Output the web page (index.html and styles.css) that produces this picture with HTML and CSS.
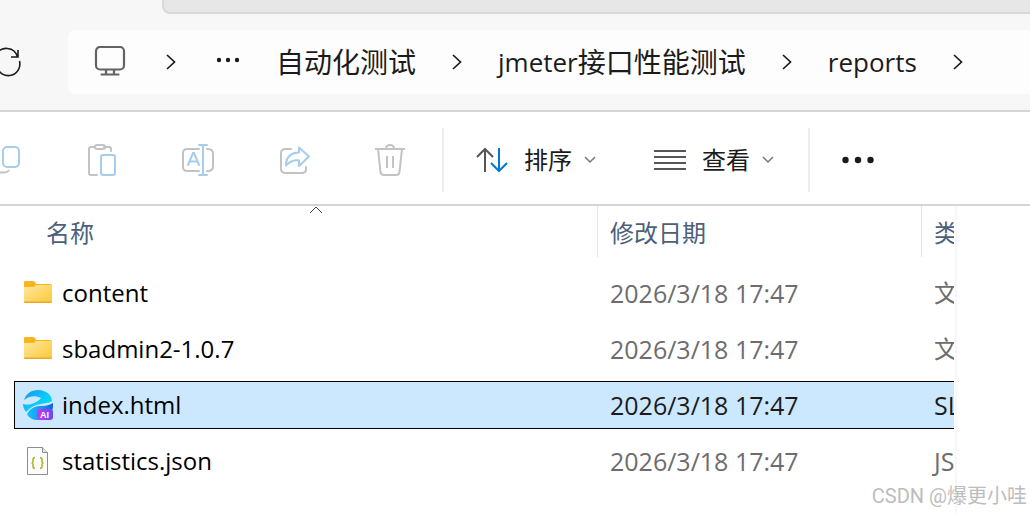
FILE: index.html
```
<!DOCTYPE html>
<html lang="zh-CN">
    <head>
        <meta charset="utf-8">
        <title>reports</title>
        <link rel="stylesheet" href="styles.css">
    </head>
<body>
    <div class="titleBar"><div class="tabStrip"></div></div>

    <nav class="navBar">
        <button class="refreshBtn" aria-label="刷新">
            <svg width="24" height="32" viewBox="0 0 24 32" fill="none" stroke="#1b1b1b" stroke-width="1.600">
                <path d="M-4 9A11.500 11.500 0 0 1 17.500 11M19.500 15A11.500 11.500 0 0 1 -3 21M18 4V11H11"/>
            </svg>
        </button>
        <div class="address">
            <button class="crumb pcIcon" aria-label="此电脑">
                <svg width="38" height="32" viewBox="0 0 38 32" fill="none" stroke="#636363" stroke-width="2.200" stroke-linecap="round">
                    <rect x="4" y="1" width="28" height="22.500" rx="4"/>
                    <path d="M14 24V28M22 24V28M9.500 28.500H26.500"/>
                </svg>
            </button>
            <svg class="arrow" viewBox="0 0 10 16"><path d="M1 1L8.500 8L1 15"/></svg>
            <button class="crumb" aria-label="更多">
                <svg width="28" height="32" viewBox="0 0 28 32" fill="#1b1b1b">
                    <circle cx="7" cy="14" r="2.200"/><circle cx="16" cy="14" r="2.200"/><circle cx="25" cy="14" r="2.200"/>
                </svg>
            </button>
            <button class="crumb">自动化测试</button>
            <svg class="arrow" viewBox="0 0 10 16"><path d="M1 1L8.500 8L1 15"/></svg>
            <button class="crumb"><span class="latin">jmeter</span>接口性能测试</button>
            <svg class="arrow" viewBox="0 0 10 16"><path d="M1 1L8.500 8L1 15"/></svg>
            <button class="crumb"><span class="latin">reports</span></button>
            <svg class="arrow" viewBox="0 0 10 16"><path d="M1 1L8.500 8L1 15"/></svg>
        </div>
    </nav>

    <div class="toolBar">
        <button class="toolBtn copyBtn" aria-label="复制" disabled>
            <svg width="24" height="36" viewBox="0 0 24 36" fill="none" stroke-width="2">
                <path stroke="#c3c3c3" d="M-2 30.500H3Q8 30.500 9 28"/>
                <rect stroke="#a5cdee" x="3" y="5" width="16" height="20" rx="4"/>
            </svg>
        </button>
        <button class="toolBtn" aria-label="粘贴" disabled>
            <svg width="36" height="36" viewBox="0 0 36 36" fill="none" stroke-width="2" stroke-linecap="round">
                <path stroke="#c3c3c3" d="M10 5H7Q5 5 5 7V31Q5 33 7 33H13M20 5H25Q27 5 27 7V9"/>
                <rect stroke="#c3c3c3" x="11" y="3" width="10" height="4" rx="2"/>
                <rect stroke="#a5cdee" x="17" y="13" width="14" height="20" rx="2"/>
            </svg>
        </button>
        <button class="toolBtn" aria-label="重命名" disabled>
            <svg width="36" height="36" viewBox="0 0 36 36" fill="none" stroke-width="2" stroke-linecap="round">
                <path stroke="#c3c3c3" d="M19 7H7Q3 7 3 11V25Q3 29 7 29H19M27 7H28Q33 7 33 12V24Q33 29 28 29H27"/>
                <path stroke="#a5cdee" d="M8 23L13 11H14L19 23M10 19.500H17M19 3H27M23 3V33M19 33H27"/>
            </svg>
        </button>
        <button class="toolBtn" aria-label="共享" disabled>
            <svg width="36" height="36" viewBox="0 0 36 36" fill="none" stroke-width="2" stroke-linecap="round">
                <path stroke="#c3c3c3" d="M15 7H10Q5 7 5 11V27Q5 31 10 31H26Q30 31 30 27V25"/>
                <path stroke="#a5cdee" stroke-linejoin="round" d="M23 5.500L33 14.500L23 24V18.500Q16 17.500 10 23.500Q10 11 23 10.500Z"/>
            </svg>
        </button>
        <button class="toolBtn" aria-label="删除" disabled>
            <svg width="36" height="36" viewBox="0 0 36 36" fill="none" stroke="#c3c3c3" stroke-width="2">
                <path d="M3 7H33M14 7Q14 3 18 3Q22 3 22 7M6 7L8.500 30Q9 33 12 33H24Q27 33 27.500 30L30 7M15 14V26M21 14V26"/>
            </svg>
        </button>
        <span class="divider"></span>
        <button class="menuBtn">
            <svg width="32" height="32" viewBox="0 0 32 32" fill="none" stroke-width="2">
                <path stroke="#555" d="M9 28V5M1 13L9 5L17 13"/>
                <path stroke="#0078d4" d="M23 4V27M15 19L23 27L31 19"/>
            </svg>
            <span>排序</span>
            <svg class="caret" viewBox="0 0 12 8"><path d="M1 1L6 6L11 1"/></svg>
        </button>
        <button class="menuBtn">
            <svg width="32" height="32" viewBox="0 0 32 32" fill="none" stroke="#555" stroke-width="2">
                <path d="M0 7H32M0 13H32M0 19H32M0 25H32"/>
            </svg>
            <span>查看</span>
            <svg class="caret" viewBox="0 0 12 8"><path d="M1 1L6 6L11 1"/></svg>
        </button>
        <span class="divider"></span>
        <button class="moreBtn" aria-label="查看更多">
            <svg width="32" height="8" viewBox="0 0 32 8" fill="#1b1b1b">
                <circle cx="3.500" cy="4" r="3.200"/><circle cx="16" cy="4" r="3.200"/><circle cx="28.500" cy="4" r="3.200"/>
            </svg>
        </button>
    </div>

    <main class="content">
        <div class="filePane">
            <table class="files">
                <colgroup><col><col class="dateCol"><col class="typeCol"></colgroup>
                <thead>
                    <tr>
                        <th class="nameHead">名称
                            <svg class="sortMark" viewBox="0 0 14 8"><path d="M1 7L7 1L13 7"/></svg>
                        </th>
                        <th>修改日期</th>
                        <th>类</th>
                    </tr>
                </thead>
                <tbody>
                    <tr>
                        <td><div class="name">
                            <svg width="30" height="32" viewBox="0 0 30 32">
                                <defs><linearGradient id="folder" x1="0" y1="0" x2="1" y2="1">
                                    <stop offset="0" stop-color="#ffe7a2"/><stop offset="1" stop-color="#fcc938"/>
                                </linearGradient></defs>
                                <path fill="#f9b51c" d="M1 5Q1 4 3 4H10Q12 4 13 7H27Q29 7 29 9V20H1Z"/>
                                <path fill="url(#folder)" d="M1 10H10Q12 10 13 8H29V24Q29 25 28 25H2Q1 25 1 24Z"/>
                                <path fill="#e9a820" d="M1 24.500H29Q29 26 28 26H2Q1 26 1 24.500Z"/>
                            </svg>
                            content
                        </div></td>
                        <td>2026/3/18 17:47</td>
                        <td class="cjk">文</td>
                    </tr>
                    <tr>
                        <td><div class="name">
                            <svg width="30" height="32" viewBox="0 0 30 32">
                                <path fill="#f9b51c" d="M1 5Q1 4 3 4H10Q12 4 13 7H27Q29 7 29 9V20H1Z"/>
                                <path fill="url(#folder)" d="M1 10H10Q12 10 13 8H29V24Q29 25 28 25H2Q1 25 1 24Z"/>
                                <path fill="#e9a820" d="M1 24.500H29Q29 26 28 26H2Q1 26 1 24.500Z"/>
                            </svg>
                            sbadmin2-1.0.7
                        </div></td>
                        <td>2026/3/18 17:47</td>
                        <td class="cjk">文</td>
                    </tr>
                    <tr class="selected">
                        <td><div class="name">
                            <svg width="30" height="32" viewBox="0 0 30 32">
                                <defs>
                                    <linearGradient id="swirl" x1="0" y1="0" x2="1" y2="1">
                                        <stop offset="0" stop-color="#1c8ff0"/><stop offset="0.500" stop-color="#08c8fb"/><stop offset="1" stop-color="#10e4fd"/>
                                    </linearGradient>
                                    <linearGradient id="bowl" x1="0" y1="0" x2="1" y2="0">
                                        <stop offset="0" stop-color="#14c3fa"/><stop offset="0.600" stop-color="#1b8ef2"/><stop offset="1" stop-color="#0a62d6"/>
                                    </linearGradient>
                                    <linearGradient id="badge" x1="0" y1="0" x2="1" y2="0">
                                        <stop offset="0" stop-color="#ce36ed"/><stop offset="1" stop-color="#6448fa"/>
                                    </linearGradient>
                                </defs>
                                <path fill="url(#swirl)" d="M1 11C3 5 8 1 15 1C23 1 29 6 29 12C25 15 17 14 11 17C7 19 5 21 3 23C1 20 0 18 0 15C6 17 14 14 18 9C12 6 6 7 1 11Z"/>
                                <path fill="url(#bowl)" d="M4 25C8 18 13 17 19 17C24 17 28 15 30 14C31 23 25 31 15 31C10 31 6 29 4 25Z"/>
                                <rect x="14" y="20" width="16" height="11" rx="3" fill="url(#badge)"/>
                                <text x="17" y="29" class="badgeText">AI</text>
                            </svg>
                            index.html
                        </div></td>
                        <td>2026/3/18 17:47</td>
                        <td>SL</td>
                    </tr>
                    <tr>
                        <td><div class="name">
                            <svg width="30" height="32" viewBox="0 0 30 32">
                                <path fill="#fafcfd" stroke="#8d8d8d" d="M4.500 2.500H19.500L24.500 7.500V29.500H4.500Z"/>
                                <path fill="#e6e6e6" stroke="#8d8d8d" d="M19.500 2.500V7.500H24.500"/>
                                <path fill="none" stroke="#b5b52c" stroke-width="1.600" d="M12 12.500Q10 12.500 10 15V16.500Q10 18 8.500 18Q10 18 10 19.500V21Q10 23.500 12 23.500M17 12.500Q19 12.500 19 15V16.500Q19 18 20.500 18Q19 18 19 19.500V21Q19 23.500 17 23.500"/>
                            </svg>
                            statistics.json
                        </div></td>
                        <td>2026/3/18 17:47</td>
                        <td>JS</td>
                    </tr>
                </tbody>
            </table>
        </div>
        <aside class="preview"></aside>
        <span class="watermark">CSDN @爆更小哇</span>
    </main>
</body>

</html>
```
FILE: styles.css
```
* {
    box-sizing: border-box;
}
body {
    margin: 0;
    min-height: 100vh;
    display: flex;
    flex-direction: column;
    overflow: hidden;
    background: #fff;
    color: #1b1b1b;
    font-family: "Open Sans", "Noto Sans CJK SC", sans-serif;
}
button {
    display: flex;
    align-items: center;
    padding: 0;
    border: 0;
    background: none;
    color: inherit;
    font: inherit;
    white-space: nowrap;
}
svg {
    flex: none;
}

/* top of the window */
.titleBar {
    padding-left: 162px;
    background: #f7f7f7;
}
.tabStrip {
    height: 14px;
    background: #e7e7e7;
    border: 2px solid #d9d9d9;
    border-width: 0 0 2px 2px;
    border-bottom-left-radius: 8px;
}
.navBar {
    display: flex;
    align-items: center;
    height: 98px;
    background: #f7f7f7;
    border-bottom: 2px solid #d5d5d5;
}
.refreshBtn {
    width: 68px;
}
.address {
    flex: 1;
    display: flex;
    align-items: center;
    gap: 36px;
    height: 64px;
    padding-left: 24px;
    background: #fdfdfd;
    border-radius: 8px 0 0 8px;
}
.crumb {
    font-size: 28px;
    line-height: 40px;
}
.latin {
    font-size: 26px;
}
.arrow {
    width: 10px;
    height: 16px;
    fill: none;
    stroke: #1b1b1b;
    stroke-width: 1.7;
}

/* commands */
.toolBar {
    display: flex;
    align-items: center;
    height: 94px;
    padding-top: 4px;
    border-bottom: 2px solid #d5d5d5;
}
.toolBtn {
    justify-content: center;
    width: 96px;
    height: 64px;
}
.copyBtn {
    justify-content: flex-start;
    width: 54px;
}
.divider {
    width: 2px;
    height: 64px;
    margin: 0 32px 0 34px;
    background: #ededed;
}
.toolBtn + .divider {
    margin-left: 4px;
}
.menuBtn {
    gap: 16px;
    font-size: 24px;
    line-height: 32px;
}
.menuBtn + .menuBtn {
    margin-left: 58px;
}
.caret {
    width: 12px;
    height: 8px;
    margin-left: -4px;
    fill: none;
    stroke: #777;
    stroke-width: 1.5;
}

/* file list */
.content {
    position: relative;
    flex: 1;
    display: flex;
}
.filePane {
    flex: 1;
    min-width: 0;
    padding-left: 14px;
    overflow: hidden;
}
.preview {
    width: 75px;
    margin-left: 1px;
    border-left: 2px solid #f7f7f7;
}
.files {
    width: 100%;
    margin-top: -8px;
    table-layout: fixed;
    border-spacing: 0 8px;
}
.dateCol {
    width: 324px;
}
.typeCol {
    width: 33px;
}
th, td {
    padding: 0 0 0 13px;
    overflow: hidden;
    white-space: nowrap;
    text-align: left;
    font-weight: normal;
    line-height: 32px;
}
th {
    height: 55px;
    padding-bottom: 2px;
    background: linear-gradient(#e5e5e5, #e5e5e5) no-repeat 0 0 / 1px 51px;
    color: #4c607a;
    font-size: 24px;
}
td {
    height: 48px;
    border: 1px solid transparent;
    border-width: 1px 0;
    color: #6d6d6d;
    font-size: 25px;
}
.cjk {
    font-size: 24px;
}
.nameHead {
    position: relative;
    padding-left: 32px;
    background: none;
}
.sortMark {
    position: absolute;
    top: 0;
    left: calc(50% + 3px);
    width: 14px;
    height: 8px;
    fill: none;
    stroke: #444;
}
.name {
    display: flex;
    align-items: center;
    gap: 9px;
}
.selected td {
    border-color: #000;
    background: #cce8ff;
    color: #1b1b1b;
}
.files td:first-child {
    padding-left: 8px;
    border-left-width: 1px;
    color: #000;
    font-size: 24px;
}
.badgeText {
    fill: #fff;
    font: bold 9px "Liberation Sans", sans-serif;
}
.watermark {
    position: absolute;
    right: 3px;
    bottom: 3px;
    color: #bdbdbd;
    font: 20px/28px Roboto, "Noto Sans CJK SC", sans-serif;
}
```
